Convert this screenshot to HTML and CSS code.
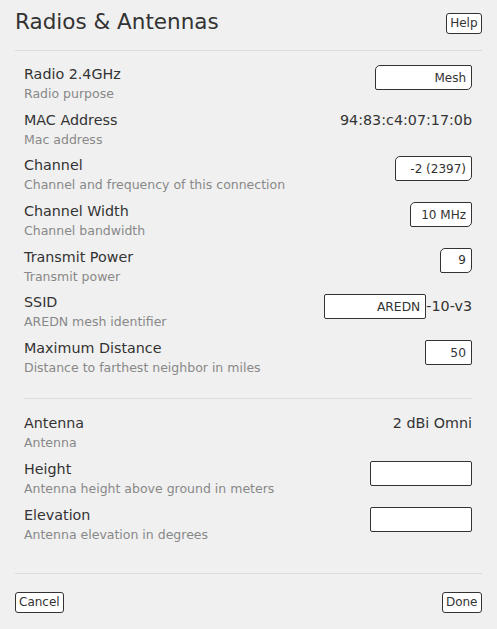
FILE: index.html
```html
<!DOCTYPE html>
<html lang="en">
<head>
    <meta charset="UTF-8">
    <meta name="viewport" content="width=device-width, initial-scale=1.0">
    <title>Radios &amp; Antennas</title>
    <link rel="stylesheet" href="styles.css">
</head>
<body>
    <div class="dialog">
        <div class="dialog-header">
            <h1>Radios &amp; Antennas</h1>
            <button type="button" class="btn help">Help</button>
        </div>
        <hr class="rule">

        <div class="section radios">
            <div class="cols">
                <div class="label">
                    <div class="title">Radio 2.4GHz</div>
                    <div class="sub">Radio purpose</div>
                </div>
                <select class="sel purpose"><option>Mesh</option></select>
            </div>
            <div class="cols">
                <div class="label">
                    <div class="title">MAC Address</div>
                    <div class="sub">Mac address</div>
                </div>
                <div class="value">94:83:c4:07:17:0b</div>
            </div>
            <div class="cols">
                <div class="label">
                    <div class="title">Channel</div>
                    <div class="sub">Channel and frequency of this connection</div>
                </div>
                <select class="sel channel"><option>-2 (2397)</option></select>
            </div>
            <div class="cols">
                <div class="label">
                    <div class="title">Channel Width</div>
                    <div class="sub">Channel bandwidth</div>
                </div>
                <select class="sel bandwidth"><option>10 MHz</option></select>
            </div>
            <div class="cols">
                <div class="label">
                    <div class="title">Transmit Power</div>
                    <div class="sub">Transmit power</div>
                </div>
                <select class="sel power"><option>9</option></select>
            </div>
            <div class="cols">
                <div class="label">
                    <div class="title">SSID</div>
                    <div class="sub">AREDN mesh identifier</div>
                </div>
                <div class="ssid">
                    <input type="text" class="field wide" value="AREDN">
                    <span>-10-v3</span>
                </div>
            </div>
            <div class="cols">
                <div class="label">
                    <div class="title">Maximum Distance</div>
                    <div class="sub">Distance to farthest neighbor in miles</div>
                </div>
                <input type="text" class="field short" value="50">
            </div>
        </div>

        <hr class="rule inset">

        <div class="section antennas">
            <div class="cols">
                <div class="label">
                    <div class="title">Antenna</div>
                    <div class="sub">Antenna</div>
                </div>
                <div class="value">2 dBi Omni</div>
            </div>
            <div class="cols">
                <div class="label">
                    <div class="title">Height</div>
                    <div class="sub">Antenna height above ground in meters</div>
                </div>
                <input type="text" class="field wide">
            </div>
            <div class="cols">
                <div class="label">
                    <div class="title">Elevation</div>
                    <div class="sub">Antenna elevation in degrees</div>
                </div>
                <input type="text" class="field wide">
            </div>
        </div>

        <hr class="rule">

        <div class="dialog-footer">
            <button type="button" class="btn">Cancel</button>
            <button type="button" class="btn">Done</button>
        </div>
    </div>
</body>
</html>
```

FILE: styles.css
```css
body {
    font-family: "DejaVu Sans", Verdana, sans-serif;
    margin: 0;
    padding: 0;
    background-color: #f0f0f0;
    color: #333;
}

.dialog {
    padding: 0 15.5px 0 15px;
}

.dialog-header {
    display: flex;
    justify-content: space-between;
    align-items: flex-start;
    padding: 8px 0 14px 0;
}

h1 {
    margin: 0;
    font-size: 21.5px;
    font-weight: normal;
    line-height: 28px;
    color: #333;
}

.rule {
    margin: 0;
    border: none;
    height: 1px;
    background-color: #dcdcdc;
}

.rule.inset {
    margin: 0 10px 0 9px;
}

.btn {
    font-family: inherit;
    font-size: 12px;
    line-height: 17px;
    color: #333;
    background-color: #fff;
    border: 1px solid #333;
    border-radius: 3px;
    padding: 1px 3px;
    margin: 0;
}

.help {
    margin-top: 5px;
}

.section {
    display: flex;
    flex-direction: column;
    gap: 5.7px;
    padding: 0 9.5px 0 9px;
}

.radios {
    padding-top: 13px;
    padding-bottom: 20px;
}

.antennas {
    padding-top: 14px;
    padding-bottom: 28px;
}

.cols {
    display: flex;
    justify-content: space-between;
    align-items: flex-start;
    height: 40px;
}

.title {
    font-size: 14.3px;
    line-height: 20px;
}

.sub {
    font-size: 12.5px;
    line-height: 20px;
    color: #888;
}

.value {
    font-size: 14.3px;
    line-height: 20px;
}

.sel {
    appearance: none;
    -webkit-appearance: none;
    font-family: inherit;
    font-size: 12px;
    color: #333;
    background-color: #fff;
    border: 1px solid #333;
    border-radius: 5px 2px 5px 2px;
    height: 25px;
    padding: 0 5px;
    margin: 1px 0 0 0;
    text-align: right;
    text-align-last: right;
    box-sizing: border-box;
}

.purpose { width: 97px; }
.channel { width: 77px; }
.bandwidth { width: 62px; }
.power { width: 32px; }

.field {
    font-family: inherit;
    font-size: 12.3px;
    color: #333;
    background-color: #fff;
    border: 1px solid #333;
    border-radius: 2px;
    height: 25px;
    padding: 0 5px;
    margin: 2px 0 0 0;
    text-align: right;
    box-sizing: border-box;
}

.wide { width: 102px; }
.short { width: 47px; }

.ssid {
    display: flex;
    align-items: center;
    font-size: 14.3px;
}

.dialog-footer {
    display: flex;
    justify-content: space-between;
    padding-top: 18px;
}
```
